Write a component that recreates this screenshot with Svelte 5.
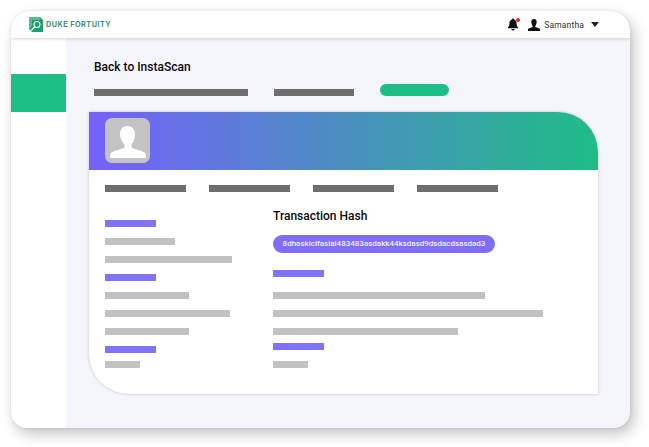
<script>
  const tabs = [81, 81, 81, 81];
  const leftRows = [
    { w: 51, c: 'purple', gap: 11 },
    { w: 70, c: 'gray', gap: 11 },
    { w: 127, c: 'gray', gap: 11 },
    { w: 51, c: 'purple', gap: 11 },
    { w: 84, c: 'gray', gap: 11 },
    { w: 125, c: 'gray', gap: 11 },
    { w: 84, c: 'gray', gap: 11 },
    { w: 51, c: 'purple', gap: 8 },
    { w: 35, c: 'gray', gap: 0 }
  ];
  const rightRows = [
    { w: 51, c: 'purple', gap: 15 },
    { w: 212, c: 'gray', gap: 11 },
    { w: 270, c: 'gray', gap: 11 },
    { w: 185, c: 'gray', gap: 8 },
    { w: 51, c: 'purple', gap: 11 },
    { w: 35, c: 'gray', gap: 0 }
  ];
</script>

<div class="page">
  <div class="window">
    <header class="topbar">
      <div class="brand">
        <svg width="14" height="15" viewBox="0 0 14 15">
          <path d="M0 0H11L14 3V15H3L0 12Z" fill="#1f9e6c" />
          <path d="M0 0H11L11.500 3H3V9L0 12Z" fill="#5cb892" />
          <circle cx="8" cy="7.500" r="3" fill="#1f9e6c" stroke="#e8f5ef" stroke-width="1.100" />
          <path d="M5.800 9.700 2 13.500" stroke="#e8f5ef" stroke-width="1.300" />
        </svg>
        <span>DUKE FORTUITY</span>
      </div>
      <div class="user">
        <span class="bell">
          <svg width="12" height="13" viewBox="0 0 12 13">
            <path d="M6 0.600c.7 0 1 .4 1 1 1.800.5 2.600 2 2.600 3.800 0 2 .5 3 1.600 4.100v.8H.8v-.8C1.900 8.400 2.400 7.400 2.400 5.400c0-1.800.8-3.300 2.600-3.800 0-.6.3-1 1-1Z" fill="#111" />
            <path d="M4.400 11h3.200a1.600 1.600 0 0 1-3.200 0Z" fill="#111" />
          </svg>
          <i class="dot"></i>
        </span>
        <svg class="person" width="12" height="12" viewBox="0 0 12 12">
          <path d="M6 0c1.700 0 2.700 1.200 2.700 3S7.700 6.800 7.200 7.200v.9c1.600.5 4.800 1.100 4.800 2.500V12H0v-1.400c0-1.400 3.200-2 4.800-2.500v-.9C4.300 6.800 3.300 4.800 3.300 3S4.300 0 6 0Z" fill="#111" />
        </svg>
        <span class="name">Samantha</span>
        <i class="caret"></i>
      </div>
    </header>

    <div class="body">
      <aside class="sidebar">
        <div class="active"></div>
      </aside>

      <main class="main">
        <h1>Back to InstaScan</h1>
        <div class="crumbs">
          <div class="bar dark one"></div>
          <div class="bar dark two"></div>
          <div class="pill-green"></div>
        </div>

        <section class="card">
          <div class="banner">
            <div class="avatar">
              <svg width="45" height="45" viewBox="0 0 45 45">
                <path d="M22.500 8c5 0 7.500 3.500 7.500 8.500 0 4.500-2 8-3.500 10v3c2.500 2 11 3 13.500 5.500 1 1 1 3 1 5H5c0-2 0-4 1-5 2.500-2.500 11-3.500 13.500-5.500v-3c-1.500-2-4.500-5.500-4.500-10 0-5 2.500-8.500 7.500-8.500Z" fill="#fff" />
              </svg>
            </div>
          </div>
          <div class="content">
            <div class="tabs">
              {#each tabs as w}
                <div class="bar dark" style="width: {w}px"></div>
              {/each}
            </div>
            <div class="cols">
              <div class="left">
                {#each leftRows as r}
                  <div class="bar {r.c}" style="width: {r.w}px; margin-bottom: {r.gap}px"></div>
                {/each}
              </div>
              <div class="right">
                <h2>Transaction Hash</h2>
                <div class="hash">8dhasklclfaslal483483asdakk44ksdasd9dsdacdsasdad3</div>
                {#each rightRows as r}
                  <div class="bar {r.c}" style="width: {r.w}px; margin-bottom: {r.gap}px"></div>
                {/each}
              </div>
            </div>
          </div>
        </section>
      </main>
    </div>
  </div>
</div>

<style>
  :global(body) {
    background: #fff;
  }
  .page {
    width: 649px;
    height: 447px;
    padding: 11px 19px 19px 11px;
    box-sizing: border-box;
    font-family: Roboto, "Liberation Sans", sans-serif;
    overflow: hidden;
  }
  .window {
    height: 417px;
    border-radius: 20px 20px 16px 16px;
    background: #f4f5fa;
    box-shadow: 0 0 3px rgba(0, 0, 0, 0.1), 4px 6px 14px rgba(0, 0, 0, 0.24);
    display: flex;
    flex-direction: column;
    overflow: hidden;
  }
  .topbar {
    height: 27px;
    flex: none;
    background: #fff;
    box-shadow: 0 1px 3px rgba(0, 0, 0, 0.18);
    display: flex;
    justify-content: space-between;
    align-items: center;
    padding: 0 31px 0 18px;
    position: relative;
  }
  .brand {
    display: flex;
    align-items: center;
    gap: 3px;
    color: #3f8f6f;
    font-size: 7.300px;
    font-weight: 700;
    letter-spacing: 0.45px;
    font-family: Inter, Roboto, sans-serif;
  }
  .user {
    display: flex;
    align-items: center;
  }
  .bell {
    position: relative;
    display: flex;
    margin-right: 9px;
  }
  .dot {
    position: absolute;
    top: 0;
    right: -1px;
    width: 4px;
    height: 4px;
    border-radius: 50%;
    background: #f0202c;
  }
  .name {
    font-size: 8.500px;
    color: #333;
    margin-left: 4px;
    letter-spacing: 0.15px;
  }
  .caret {
    margin-left: 7px;
    width: 0;
    height: 0;
    border-left: 4.500px solid transparent;
    border-right: 4.500px solid transparent;
    border-top: 5px solid #222;
  }
  .body {
    flex: 1;
    display: flex;
    min-height: 0;
  }
  .sidebar {
    width: 55px;
    flex: none;
    background: #fff;
    padding-top: 36px;
  }
  .active {
    height: 38px;
    background: #1fbd86;
  }
  .main {
    flex: 1;
    padding: 22px 32px 0 23px;
    min-width: 0;
  }
  h1 {
    margin: 0 0 0 5px;
    font-size: 12px;
    line-height: 15px;
    font-weight: 500;
    color: #0a0a0a;
  }
  .crumbs {
    margin: 9px 0 0 5px;
    height: 22px;
    display: flex;
    align-items: flex-start;
  }
  .bar {
    height: 7px;
    flex: none;
  }
  .dark {
    background: #6e6e6e;
  }
  .gray {
    background: #c2c2c2;
  }
  .purple {
    background: #7f74f8;
  }
  .crumbs .one {
    width: 154px;
    margin-top: 5px;
  }
  .crumbs .two {
    width: 80px;
    margin: 5px 0 0 26px;
  }
  .pill-green {
    width: 69px;
    height: 12px;
    margin-left: 26px;
    border-radius: 6px;
    background: #1fbd86;
  }
  .card {
    margin-top: 6px;
    width: 509px;
    height: 282px;
    background: #fff;
    border-radius: 0 40px 0 40px;
    box-shadow: 0 0 3px rgba(70, 70, 110, 0.3);
    overflow: hidden;
  }
  .banner {
    height: 58px;
    padding: 6px 16px;
    box-sizing: border-box;
    background: linear-gradient(90deg, #7660fb 0%, #1fbd86 100%);
  }
  .avatar {
    width: 45px;
    height: 45px;
    border-radius: 7px;
    background: #c3c3c3;
  }
  .avatar svg {
    display: block;
  }
  .content {
    padding: 15px 16px 0;
  }
  .tabs {
    display: flex;
    gap: 23px;
  }
  .cols {
    display: flex;
    margin-top: 13px;
  }
  .left {
    width: 168px;
    flex: none;
    padding-top: 15px;
  }
  .right {
    flex: 1;
  }
  h2 {
    margin: 0;
    font-size: 12px;
    line-height: 22px;
    font-weight: 500;
    color: #0a0a0a;
  }
  .hash {
    margin: 8px 0 17px;
    width: 222px;
    height: 18px;
    border-radius: 9px;
    background: #7f6df5;
    color: #f1efff;
    font-size: 8px;
    font-weight: 500;
    line-height: 18px;
    text-align: center;
    white-space: nowrap;
  }
</style>
